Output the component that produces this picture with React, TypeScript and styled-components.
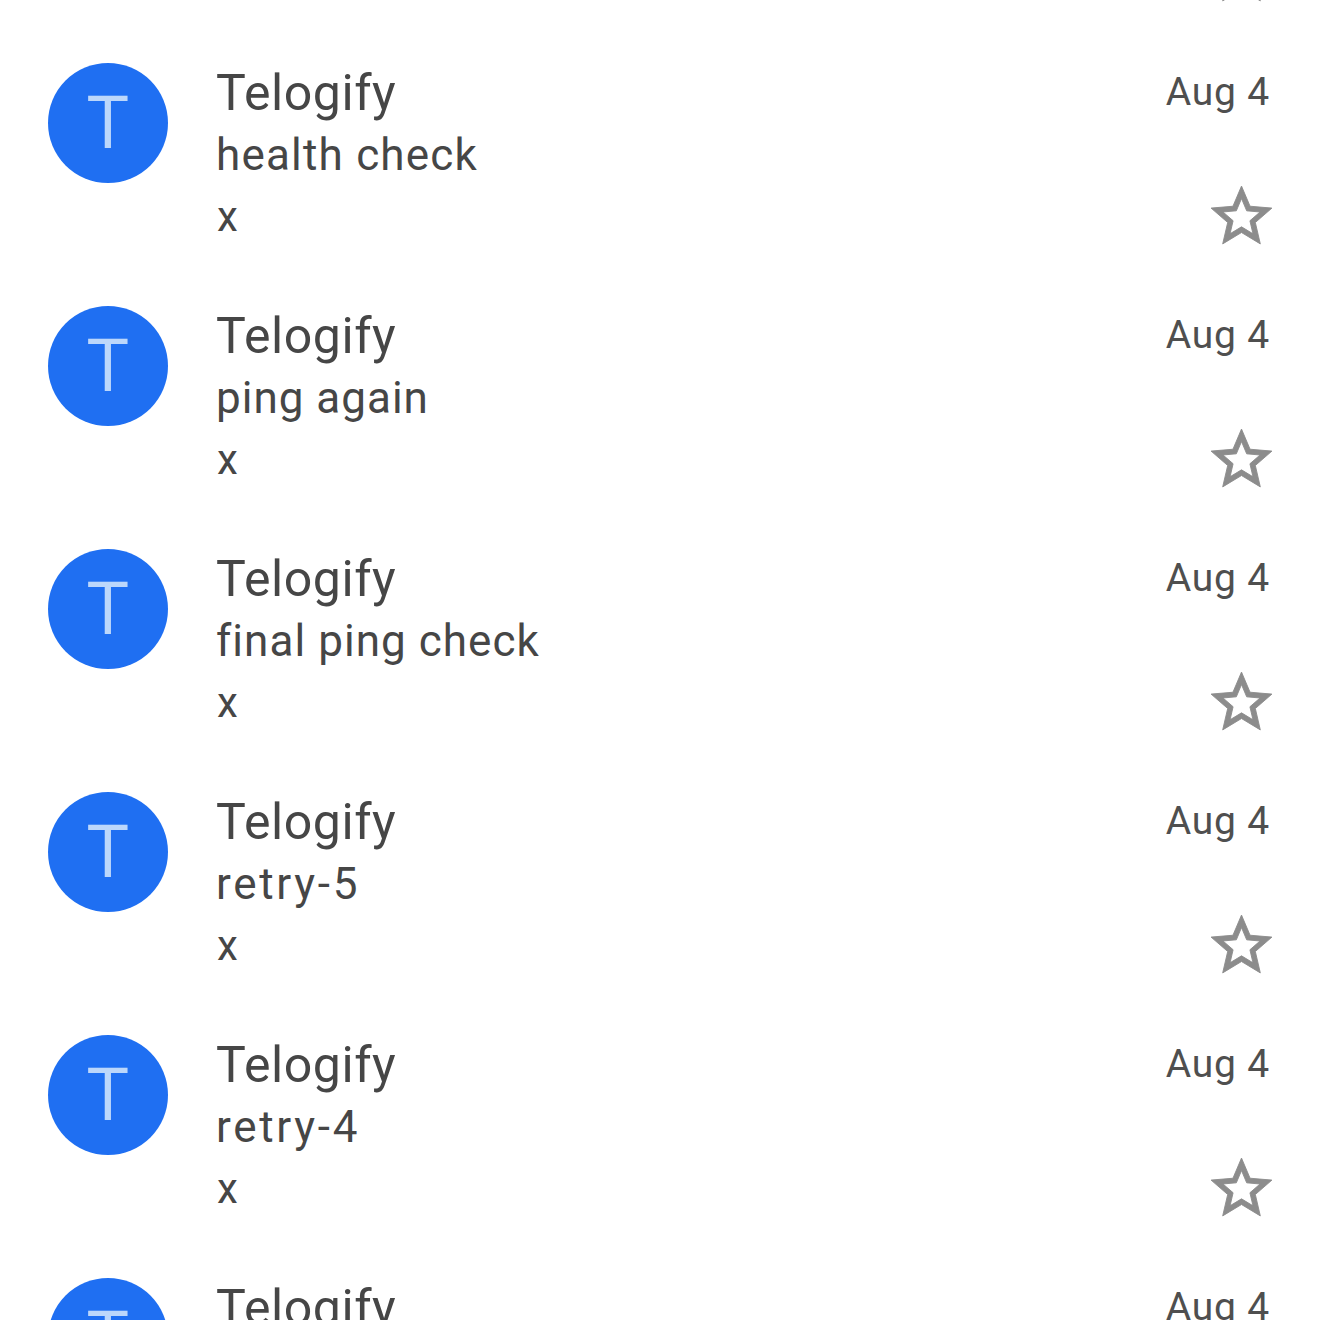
import styled, { createGlobalStyle } from "styled-components"

const GlobalStyle = createGlobalStyle`
    html, body {
        margin: 0;
        padding: 0;
        background: #ffffff;
    }
`

const Screen = styled.div`
    height: 1320px;
    overflow: hidden;
    background: #ffffff;
    font-family: Roboto, "Liberation Sans", sans-serif;
`

const List = styled.ul`
    list-style: none;
    margin: -201px 0 0;
    padding: 0;
`

const Row = styled.li`
    box-sizing: border-box;
    height: 243px;
    padding: 21px 42px 0 48px;
    display: flex;
    align-items: flex-start;
`

const Avatar = styled.div`
    width: 120px;
    height: 120px;
    flex: none;
    border-radius: 50%;
    background: #1f6ff2;
    color: #bcd7fb;
    font-family: "Open Sans", Roboto, sans-serif;
    font-size: 74px;
    font-weight: 400;
    line-height: 113px;
    text-align: center;
    margin-right: 48px;
`

const Body = styled.div`
    flex: 1;
    min-width: 0;
    display: flex;
    flex-direction: column;
    color: #464646;
`

const Sender = styled.div`
    font-size: 50px;
    line-height: 62px;
    margin-top: -1px;
    letter-spacing: 0.55px;
`

const Subject = styled.div<{ $tracking: number }>`
    font-size: 44px;
    line-height: 62px;
    letter-spacing: ${(p) => p.$tracking}px;
`

const Preview = styled.div`
    font-size: 42px;
    line-height: 62px;
    margin-left: 1px;
`

const Side = styled.div`
    display: flex;
    flex-direction: column;
    align-items: flex-end;
    height: 222px;
`

const DateLabel = styled.div`
    font-size: 39px;
    line-height: 58px;
    letter-spacing: 0.8px;
    color: #4f4f4f;
    margin-right: 8px;
`

const StarIcon = styled.svg`
    width: 73px;
    height: 73px;
    margin-top: 59px;
    fill: #8c8c8c;
    stroke: #8c8c8c;
    stroke-width: 0.3;
`

const rows = [
    { subject: "", tracking: 1.1 },
    { subject: "health check", tracking: 1.2 },
    { subject: "ping again", tracking: 1 },
    { subject: "final ping check", tracking: 1.05 },
    { subject: "retry-5", tracking: 2.7 },
    { subject: "retry-4", tracking: 2.7 },
    { subject: "", tracking: 1.1 },
]

const Star = () => (
    <StarIcon viewBox="0 0 24 24">
        <path d="M22 9.24l-7.19-.62L12 2 9.19 8.63 2 9.24l5.46 4.73L5.82 21 12 17.27 18.18 21l-1.63-7.03L22 9.24zM12 15.4l-3.76 2.27 1-4.28-3.32-2.88 4.38-.38L12 6.1l1.71 4.04 4.38.38-3.32 2.88 1 4.28L12 15.4z" />
    </StarIcon>
)

export default function App() {
    return (
        <Screen>
            <GlobalStyle />
            <List>
                {rows.map((row, i) => (
                    <Row key={i}>
                        <Avatar>T</Avatar>
                        <Body>
                            <Sender>Telogify</Sender>
                            <Subject $tracking={row.tracking}>{row.subject}</Subject>
                            <Preview>x</Preview>
                        </Body>
                        <Side>
                            <DateLabel>Aug 4</DateLabel>
                            <Star />
                        </Side>
                    </Row>
                ))}
            </List>
        </Screen>
    )
}
